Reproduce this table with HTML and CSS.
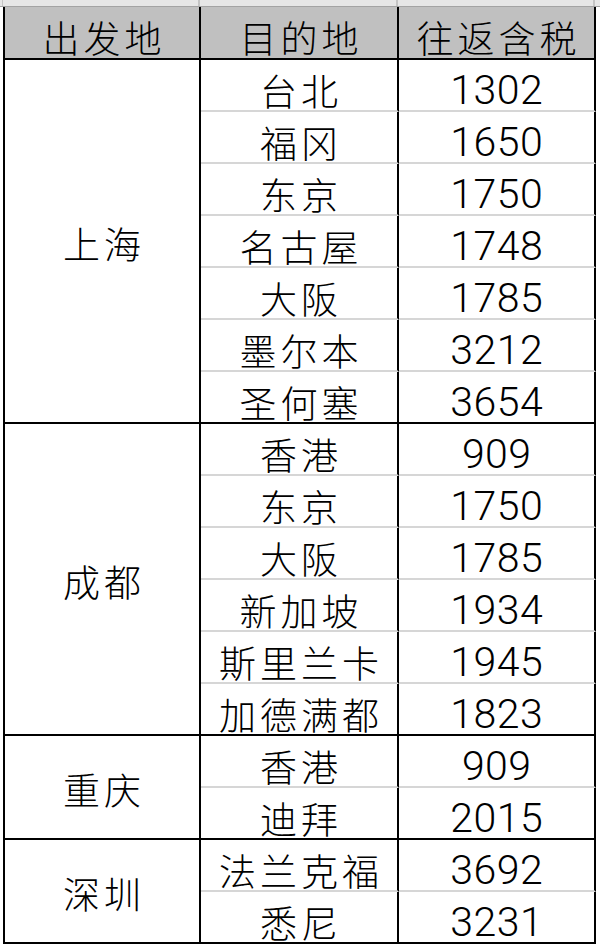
FILE: index.html
```html
<!DOCTYPE html>
<html lang="zh-CN">
<head>
<meta charset="utf-8">
<title>往返含税</title>
<link rel="stylesheet" href="styles.css">
</head>
<body>
<div class="topstrip">
  <div class="ts ts1"></div><div class="ts ts2"></div><div class="ts ts3"></div><div class="ts ts4"></div>
</div>
<div class="sheet">
<table class="grid">
  <thead>
    <tr class="head">
      <th class="c1"><div class="cell">出发地</div></th>
      <th class="c2"><div class="cell">目的地</div></th>
      <th class="c3"><div class="cell">往返含税</div></th>
    </tr>
  </thead>
  <tbody>
    <tr><td class="c1 from gend" rowspan="7"><div class="mcell">上海</div></td><td class="c2"><div class="cell">台北</div></td><td class="c3 num"><div class="cell">1302</div></td></tr>
    <tr><td class="c2"><div class="cell">福冈</div></td><td class="c3 num"><div class="cell">1650</div></td></tr>
    <tr><td class="c2"><div class="cell">东京</div></td><td class="c3 num"><div class="cell">1750</div></td></tr>
    <tr><td class="c2"><div class="cell">名古屋</div></td><td class="c3 num"><div class="cell">1748</div></td></tr>
    <tr><td class="c2"><div class="cell">大阪</div></td><td class="c3 num"><div class="cell">1785</div></td></tr>
    <tr><td class="c2"><div class="cell">墨尔本</div></td><td class="c3 num"><div class="cell">3212</div></td></tr>
    <tr class="last"><td class="c2"><div class="cell">圣何塞</div></td><td class="c3 num"><div class="cell">3654</div></td></tr>

    <tr><td class="c1 from gend" rowspan="6"><div class="mcell">成都</div></td><td class="c2"><div class="cell">香港</div></td><td class="c3 num"><div class="cell">909</div></td></tr>
    <tr><td class="c2"><div class="cell">东京</div></td><td class="c3 num"><div class="cell">1750</div></td></tr>
    <tr><td class="c2"><div class="cell">大阪</div></td><td class="c3 num"><div class="cell">1785</div></td></tr>
    <tr><td class="c2"><div class="cell">新加坡</div></td><td class="c3 num"><div class="cell">1934</div></td></tr>
    <tr><td class="c2"><div class="cell">斯里兰卡</div></td><td class="c3 num"><div class="cell">1945</div></td></tr>
    <tr class="last"><td class="c2"><div class="cell">加德满都</div></td><td class="c3 num"><div class="cell">1823</div></td></tr>

    <tr><td class="c1 from gend" rowspan="2"><div class="mcell">重庆</div></td><td class="c2"><div class="cell">香港</div></td><td class="c3 num"><div class="cell">909</div></td></tr>
    <tr class="last"><td class="c2"><div class="cell">迪拜</div></td><td class="c3 num"><div class="cell">2015</div></td></tr>

    <tr><td class="c1 from gend" rowspan="2"><div class="mcell">深圳</div></td><td class="c2"><div class="cell">法兰克福</div></td><td class="c3 num"><div class="cell">3692</div></td></tr>
    <tr class="last"><td class="c2"><div class="cell">悉尼</div></td><td class="c3 num"><div class="cell">3231</div></td></tr>
  </tbody>
</table>
</div>
</body>
</html>
```

FILE: styles.css
```css
html, body {
  margin: 0;
  padding: 0;
  background: #ffffff;
}

body {
  width: 600px;
  height: 948px;
  overflow: hidden;
  font-family: "Noto Sans CJK SC", "Noto Sans", sans-serif;
  color: #000000;
}

.topstrip {
  display: flex;
  height: 6px;
  background: #e6e6e6;
  border-bottom: 1px solid #a3a3a3;
}

.ts {
  height: 6px;
  box-sizing: border-box;
  border-right: 2px solid #c4c4c4;
}
.ts1 { width: 3px; border-right: 1px solid #c4c4c4; }
.ts2 { width: 197px; }
.ts3 { width: 198px; }
.ts4 { width: 197px; }

.sheet {
  padding-left: 3px;
}

.grid {
  border-collapse: separate;
  border-spacing: 0;
  border-left: 2px solid #000000;
  table-layout: fixed;
}

.grid th,
.grid td {
  padding: 0;
  text-align: center;
  border-right: 2px solid #000000;
  border-bottom: 2px solid #d6d6d6;
  font-weight: 300;
  font-size: 37px;
  white-space: nowrap;
}

.grid .c1 { width: 194px; }
.grid .c2 { width: 196px; }
.grid .c3 { width: 195px; }

.cell {
  box-sizing: border-box;
  height: 50px;
  padding-top: 10px;
  line-height: 40px;
  letter-spacing: 4px;
  text-indent: 4px;
}

.head th {
  background: #c0c0c0;
  border-bottom: 2px solid #000000;
}

.head .cell {
  height: 51px;
}

.grid td {
  vertical-align: top;
}

.grid td.num .cell {
  font-family: "Roboto", "Liberation Sans", Arial, sans-serif;
  font-size: 41px;
  font-weight: 300;
  letter-spacing: 0.5px;
  text-indent: 0.5px;
}

.grid td.from {
  vertical-align: middle;
}

.mcell {
  line-height: 40px;
  padding-top: 4px;
  letter-spacing: 4px;
  text-indent: 4px;
}

.grid td.gend,
.grid tr.last td {
  border-bottom-color: #000000;
}
```
